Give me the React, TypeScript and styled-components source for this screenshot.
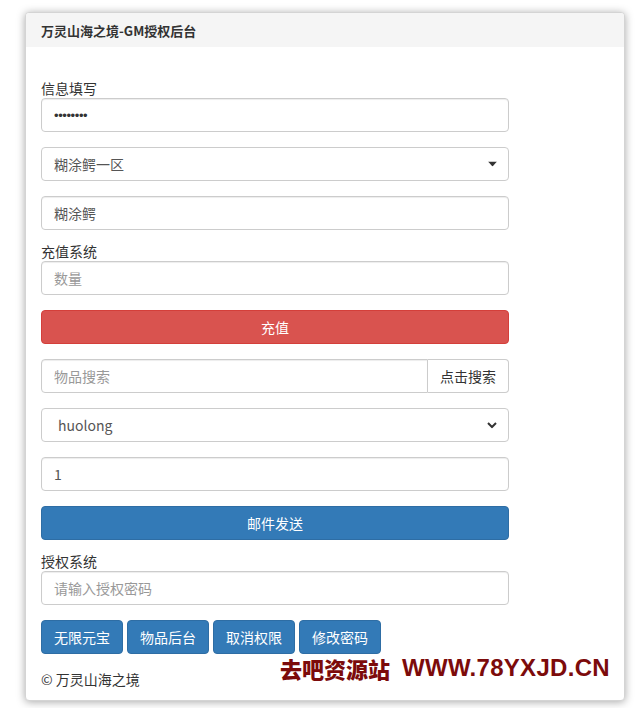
import React from "react";
import styled, { createGlobalStyle } from "styled-components";

const Global = createGlobalStyle`
  html, body { margin: 0; padding: 0; background: #fff; }
  body {
    font-family: "Noto Sans CJK SC", "Liberation Sans", sans-serif;
    font-size: 14px;
    color: #333;
  }
  * { box-sizing: border-box; }
`;

const Page = styled.div`
  padding: 12px 15px 8px 25px;
`;

const Card = styled.div`
  position: relative;
  width: 600px;
  height: 689px;
  background: #fff;
  border: 1px solid #d4d4d4;
  border-radius: 4px;
  box-shadow: 0 1px 8px rgba(0, 0, 0, 0.35);
  overflow: hidden;
`;

const Heading = styled.div`
  height: 34px;
  background: #f5f5f5;
  padding: 0 15px;
  display: flex;
  align-items: center;
  font-weight: bold;
  font-size: 13px;
  color: #333;
`;

const Body = styled.div`
  padding: 35px 15px 0 15px;
`;

const Form = styled.div`
  width: 468px;
  display: flex;
  flex-direction: column;
`;

const Group = styled.div`
  display: flex;
  flex-direction: column;
  margin-bottom: 15px;
`;

const Label = styled.label`
  font-size: 14px;
  line-height: 13px;
  padding-bottom: 3px;
  color: #333;
`;

const Input = styled.input`
  height: 34px;
  width: 100%;
  padding: 6px 12px;
  font-family: "Noto Sans CJK SC", "Liberation Sans", sans-serif;
  font-size: 14px;
  color: #555;
  background: #fff;
  border: 1px solid #ccc;
  border-radius: 4px;
  box-shadow: inset 0 1px 1px rgba(0, 0, 0, 0.075);
  outline: none;
  &::placeholder { color: #999; }
`;

const PasswordInput = styled(Input)`
  font-family: "Liberation Sans", sans-serif;
  font-size: 13px;
  letter-spacing: -0.4px;
  color: #333;
`;

const SelectWrap = styled.div`
  position: relative;
`;

const Select = styled.select<{ $indent?: number }>`
  appearance: none;
  -webkit-appearance: none;
  height: 34px;
  width: 100%;
  padding: 6px 12px 6px ${(p) => p.$indent ?? 12}px;
  font-family: "Noto Sans CJK SC", "Liberation Sans", sans-serif;
  font-size: 14px;
  color: #555;
  background: #fff;
  border: 1px solid #ccc;
  border-radius: 4px;
  outline: none;
`;

const Arrow = styled.span`
  position: absolute;
  right: 12px;
  top: 50%;
  transform: translateY(-50%);
  display: flex;
  pointer-events: none;
`;

const Btn = styled.button<{ $variant: "danger" | "primary" }>`
  height: 34px;
  border-radius: 4px;
  font-family: "Noto Sans CJK SC", "Liberation Sans", sans-serif;
  font-size: 14px;
  color: #fff;
  cursor: pointer;
  background: ${(p) => (p.$variant === "danger" ? "#d9534f" : "#337ab7")};
  border: 1px solid ${(p) => (p.$variant === "danger" ? "#d43f3a" : "#2e6da4")};
`;

const BlockBtn = styled(Btn)`
  width: 100%;
`;

const InputGroup = styled.div`
  display: flex;
`;

const GroupInput = styled(Input)`
  flex: 1;
  border-radius: 4px 0 0 4px;
`;

const AddonBtn = styled.button`
  height: 34px;
  width: 81px;
  font-family: "Noto Sans CJK SC", "Liberation Sans", sans-serif;
  font-size: 14px;
  color: #333;
  background: #fff;
  border: 1px solid #ccc;
  border-left: none;
  border-radius: 0 4px 4px 0;
  padding: 0;
`;

const ButtonRow = styled.div`
  display: flex;
  gap: 4px;
`;

const SmallBtn = styled(Btn)`
  width: 82px;
  padding: 0;
`;

const Footer = styled.div`
  margin-top: 15px;
  font-size: 14px;
  line-height: 20px;
  color: #333;
`;

const Watermark = styled.div`
  position: absolute;
  left: 254px;
  top: 640px;
  display: flex;
  gap: 12px;
  align-items: center;
  color: #7c0b0b;
  line-height: 30px;
  white-space: nowrap;
`;

const WmCn = styled.span`
  font-family: "Noto Sans CJK SC", sans-serif;
  font-weight: 900;
  font-size: 22px;
`;

const WmEn = styled.span`
  font-family: "Liberation Sans", sans-serif;
  font-weight: bold;
  font-size: 24px;
  letter-spacing: 0.3px;
`;

export default function App() {
  return (
    <Page>
      <Global />
      <Card>
        <Heading>万灵山海之境-GM授权后台</Heading>
        <Body>
          <Form>
            <Group>
              <Label>信息填写</Label>
              <PasswordInput type="password" defaultValue="12345678" readOnly />
            </Group>
            <Group>
              <SelectWrap>
                <Select defaultValue="1">
                  <option value="1">糊涂鳄一区</option>
                </Select>
                <Arrow>
                  <svg width="9" height="5" viewBox="0 0 9 5">
                    <path d="M0 0 L9 0 L4.5 5 Z" fill="#333" />
                  </svg>
                </Arrow>
              </SelectWrap>
            </Group>
            <Group>
              <Input defaultValue="糊涂鳄" />
            </Group>
            <Group>
              <Label>充值系统</Label>
              <Input placeholder="数量" />
            </Group>
            <Group>
              <BlockBtn $variant="danger">充值</BlockBtn>
            </Group>
            <Group>
              <InputGroup>
                <GroupInput placeholder="物品搜索" />
                <AddonBtn>点击搜索</AddonBtn>
              </InputGroup>
            </Group>
            <Group>
              <SelectWrap>
                <Select defaultValue="huolong" $indent={16}>
                  <option value="huolong">huolong</option>
                </Select>
                <Arrow>
                  <svg width="10" height="7" viewBox="0 0 10 7">
                    <path d="M1 1.5 L5 5.5 L9 1.5" fill="none" stroke="#333" strokeWidth="2" />
                  </svg>
                </Arrow>
              </SelectWrap>
            </Group>
            <Group>
              <Input defaultValue="1" />
            </Group>
            <Group>
              <BlockBtn $variant="primary">邮件发送</BlockBtn>
            </Group>
            <Group>
              <Label>授权系统</Label>
              <Input placeholder="请输入授权密码" />
            </Group>
            <ButtonRow>
              <SmallBtn $variant="primary">无限元宝</SmallBtn>
              <SmallBtn $variant="primary">物品后台</SmallBtn>
              <SmallBtn $variant="primary">取消权限</SmallBtn>
              <SmallBtn $variant="primary">修改密码</SmallBtn>
            </ButtonRow>
            <Footer>© 万灵山海之境</Footer>
          </Form>
        </Body>
        <Watermark>
          <WmCn>去吧资源站</WmCn>
          <WmEn>WWW.78YXJD.CN</WmEn>
        </Watermark>
      </Card>
    </Page>
  );
}
